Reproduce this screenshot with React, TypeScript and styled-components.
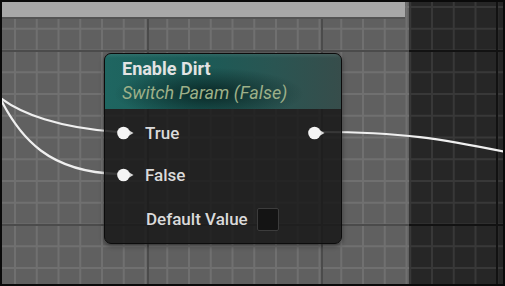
import React from "react";
import styled, { createGlobalStyle, css } from "styled-components";

const GlobalStyle = createGlobalStyle`
    html, body {
        margin: 0;
        padding: 0;
        background: #000;
    }
    * {
        box-sizing: border-box;
    }
`;

// grid lines: minor every 21.75px, major every 174px
const grid = (bg: string, minor: string, major: string, minX: number, majX: number, minY: number, majY: number) => css`
    background-color: ${bg};
    background-image:
        linear-gradient(to right, ${major} 2px, transparent 2px),
        linear-gradient(to bottom, ${major} 2px, transparent 2px),
        linear-gradient(to right, ${minor} 2px, transparent 2px),
        linear-gradient(to bottom, ${minor} 2px, transparent 2px);
    background-size: 174px 100%, 100% 174px, 21.75px 100%, 100% 21.75px;
    background-position: ${majX}px 0, 0 ${majY}px, ${minX}px 0, 0 ${minY}px;
`;

const Frame = styled.div`
    position: relative;
    width: 505px;
    height: 286px;
    border: 2px solid #0a0a0a;
    overflow: hidden;
    display: flex;
    font-family: Roboto, "Liberation Sans", sans-serif;
    ${grid("#606060", "#707070", "#4b4b4b", 12, 145, 4, 48)}
`;

const LeftColumn = styled.div`
    width: 407px;
    display: flex;
    flex-direction: column;
`;

const TopBar = styled.div`
    width: 403px;
    height: 17px;
    background: #a8a8a8;
    border-bottom: 2px solid #545454;
`;

const RightPanel = styled.div`
    flex: 1;
    ${grid("#262626", "#383838", "#121212", 22, 87, 4, 48)}
`;

const Wires = styled.svg`
    position: absolute;
    left: -2px;
    top: -2px;
    width: 505px;
    height: 286px;
    pointer-events: none;
`;

const Node = styled.div`
    position: absolute;
    left: 102px;
    top: 51px;
    width: 238px;
    height: 191px;
    border: 1px solid #0c0c0c;
    border-radius: 7px;
    overflow: hidden;
    background: rgba(24, 25, 24, 0.86);
    box-shadow: 0 2px 5px rgba(0, 0, 0, 0.45);
    display: flex;
    flex-direction: column;
`;

const Header = styled.div`
    height: 55px;
    padding: 3px 0 0 17px;
    display: flex;
    flex-direction: column;
    background:
        radial-gradient(ellipse 95px 26px at 44% 72%, rgba(6, 28, 27, 0.8), transparent),
        linear-gradient(to bottom, rgba(255, 255, 255, 0.08), transparent 4px),
        linear-gradient(to right, #1f6661 0%, #1b5b57 40%, #2a5552 72%, #374d4b 100%);
    > h1 {
        margin: 0;
        font-size: 18px;
        font-weight: 700;
        line-height: 24px;
        color: #e3e3e3;
    }
    > span {
        font-size: 18px;
        font-style: italic;
        line-height: 22px;
        margin-top: 1px;
        color: #9db089;
    }
`;

const Body = styled.div`
    padding-top: 3px;
    display: flex;
    flex-direction: column;
`;

const Row = styled.div<{ $h: number; $indent: number }>`
    height: ${(p) => p.$h}px;
    padding: 0 16px 0 ${(p) => p.$indent}px;
    display: flex;
    align-items: center;
    justify-content: space-between;
`;

const PinLabel = styled.div<{ $gap: number }>`
    display: flex;
    align-items: center;
    gap: ${(p) => p.$gap}px;
    font-size: 17px;
    font-weight: 500;
    color: #dadada;
`;

const CheckBox = styled.div`
    width: 22px;
    height: 23px;
    background: #141414;
    border: 1px solid #3c3c3c;
    border-radius: 2px;
`;

const Pin: React.FC = () => (
    <svg width="17" height="14" viewBox="0 0 17 14">
        <polygon points="10.5,3.5 16.5,7 10.5,10.5" fill="#d8d8d8" />
        <circle cx="6.5" cy="7" r="6.3" fill="#f4f4f4" />
    </svg>
);

const App: React.FC = () => {
    return (
        <>
            <GlobalStyle />
            <Frame>
                <LeftColumn>
                    <TopBar />
                </LeftColumn>
                <RightPanel />
                <Wires viewBox="0 0 505 286">
                    <g fill="none" stroke="#efefef" strokeWidth="2.2" strokeLinecap="round">
                        <path d="M -2 96 C 20 114, 60 128, 118 132" />
                        <path d="M -2 94 C 20 140, 50 172, 118 174" />
                        <path d="M 320 132 C 400 132, 440 138, 520 155" />
                    </g>
                </Wires>
                <Node>
                    <Header>
                        <h1>Enable Dirt</h1>
                        <span>Switch Param (False)</span>
                    </Header>
                    <Body>
                        <Row $h={42} $indent={12}>
                            <PinLabel $gap={11}>
                                <Pin />
                                True
                            </PinLabel>
                            <Pin />
                        </Row>
                        <Row $h={42} $indent={12}>
                            <PinLabel $gap={11}>
                                <Pin />
                                False
                            </PinLabel>
                        </Row>
                        <Row $h={46} $indent={41}>
                            <PinLabel $gap={9}>
                                Default Value
                                <CheckBox />
                            </PinLabel>
                        </Row>
                    </Body>
                </Node>
            </Frame>
        </>
    );
};

export default App;
